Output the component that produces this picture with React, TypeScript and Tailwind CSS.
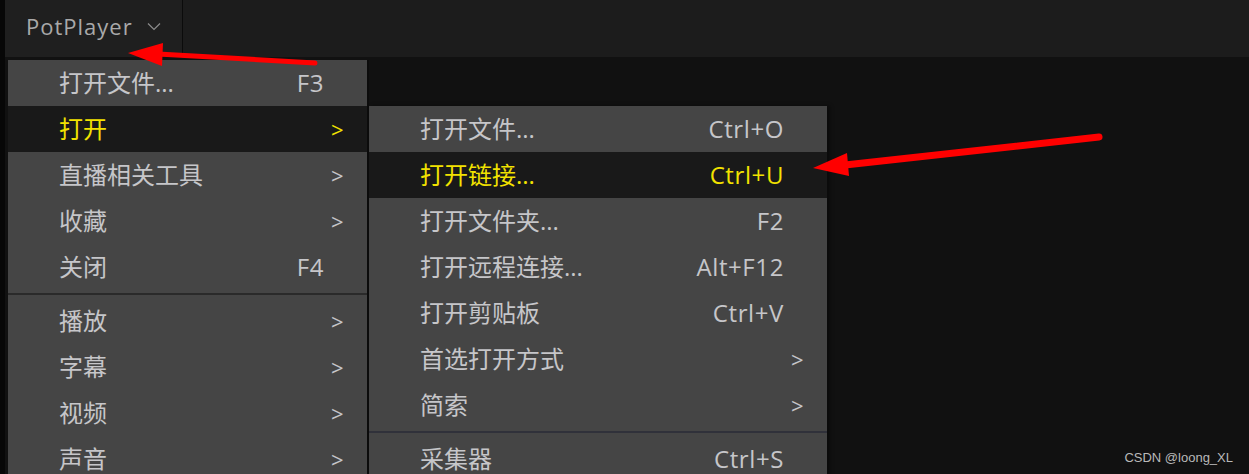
import React from "react";

type Item =
  | { sep: true }
  | { label: string; key?: string; sub?: boolean; active?: boolean; sep?: false };

const mainMenu: Item[] = [
  { label: "打开文件...", key: "F3" },
  { label: "打开", sub: true, active: true },
  { label: "直播相关工具", sub: true },
  { label: "收藏", sub: true },
  { label: "关闭", key: "F4" },
  { sep: true },
  { label: "播放", sub: true },
  { label: "字幕", sub: true },
  { label: "视频", sub: true },
  { label: "声音", sub: true },
];

const openMenu: Item[] = [
  { label: "打开文件...", key: "Ctrl+O" },
  { label: "打开链接...", key: "Ctrl+U", active: true },
  { label: "打开文件夹...", key: "F2" },
  { label: "打开远程连接...", key: "Alt+F12" },
  { label: "打开剪贴板", key: "Ctrl+V" },
  { label: "首选打开方式", sub: true },
  { label: "简索", sub: true },
  { sep: true },
  { label: "采集器", key: "Ctrl+S" },
];

const MenuList = ({ items, line }: { items: Item[]; line: string }) => (
  <div className="flex flex-col">
    {items.map((it, i) =>
      it.sep ? (
        <div key={i} className="h-[8px] shrink-0 flex flex-col justify-center">
          <div className={`h-[2px] ${line}`} />
        </div>
      ) : (
        <div
          key={i}
          className={`h-[46px] shrink-0 flex items-center pl-[51px] ${
            it.active ? "bg-[#191919] text-[#f2e200]" : "text-[#c6c6c9]"
          }`}
        >
          <span className="flex-1 whitespace-nowrap">{it.label}</span>
          <span className="tracking-[0.6px]">{it.key}</span>
          <span className="w-[43px] pl-[7px] text-[22px]">{it.sub ? ">" : ""}</span>
        </div>
      )
    )}
  </div>
);

export default function App() {
  return (
    <div
      className="w-[1249px] h-[474px] bg-[#111111] relative overflow-hidden flex text-[24px] leading-none"
      style={{ fontFamily: '"Open Sans", "Noto Sans CJK SC", sans-serif' }}
    >
      <div className="w-[5px] h-full shrink-0 bg-[#070707]" />
      <div className="flex-1 flex flex-col">
        {/* title bar */}
        <div className="h-[57px] shrink-0 flex bg-[#1c1c1c]">
          <div className="w-[178px] bg-[#1f1f1f] border-r border-[#0b0b0b] flex items-center pl-[21px] pb-[5px] gap-[14px]">
            <span className="text-[22px] text-[#a9a9a9] tracking-[1px]">PotPlayer</span>
            <svg width="14" height="9" viewBox="0 0 14 9" className="mt-[1px]">
              <path d="M1 1.5 L7 7.5 L13 1.5" stroke="#8c8c8c" strokeWidth="1.2" fill="none" />
            </svg>
          </div>
        </div>
        <div className="h-[3px] shrink-0" />

        <div className="flex shrink-0 pl-[3px] items-start">
          <div className="w-[359px] bg-[#454545]">
            <MenuList items={mainMenu} line="bg-[#2a2a2a]" />
          </div>
          <div className="w-[2px] self-stretch bg-[#0c0c0c]" />
          <div className="w-[458px] mt-[46px] bg-[#454545] shadow-[3px_0_4px_rgba(0,0,0,0.4)]">
            <MenuList items={openMenu} line="bg-[#30313a]" />
          </div>
        </div>
      </div>

      {/* annotation arrows */}
      <svg className="absolute inset-0 pointer-events-none" width="1249" height="474">
        <line x1="315" y1="63" x2="158" y2="54" stroke="#ff0000" strokeWidth="5" strokeLinecap="round" />
        <polygon points="128,53 163,43 162,66" fill="#ff0000" />
        <line x1="1099" y1="137" x2="845" y2="165" stroke="#ff0000" strokeWidth="7" strokeLinecap="round" />
        <polygon points="813,168 847,153 849,176" fill="#ff0000" />
      </svg>

      <div
        className="absolute right-[16px] bottom-[10px] text-[13px] text-[#b9b9b9]"
        style={{ fontFamily: '"Liberation Sans", sans-serif' }}
      >
        CSDN @loong_XL
      </div>
    </div>
  );
}
